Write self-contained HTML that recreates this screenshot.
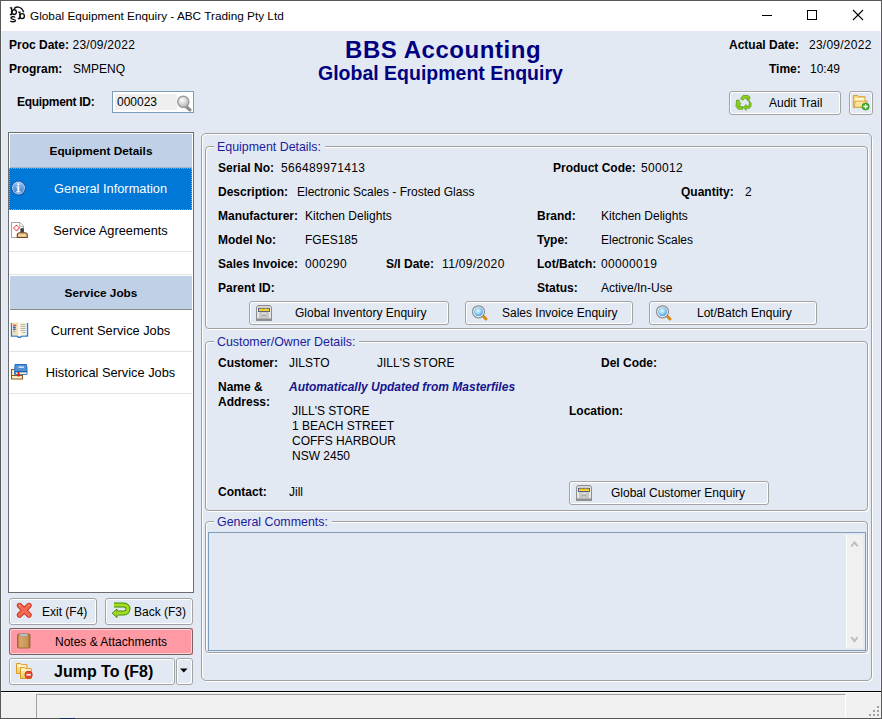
<!DOCTYPE html>
<html><head><meta charset="utf-8">
<style>
*{box-sizing:border-box;margin:0;padding:0}
html,body{width:882px;height:719px;overflow:hidden;background:#e3e9f3}
body{font-family:"Liberation Sans",sans-serif;font-size:12px;color:#000;position:relative}
.a{position:absolute;white-space:nowrap;line-height:14px}
.b{font-weight:bold}
.btn{position:absolute;border:1px solid #a3a3a3;border-radius:3px;box-shadow:inset 1px 1px 0 #fff,inset -1px -1px 0 #fff;background:#e3e9f3}
.fs{position:absolute;border:1px solid #a0a0a0;border-radius:4px;box-shadow:inset 1px 1px 0 #fff,1px 1px 0 #fff}
.lg{position:absolute;background:#e3e9f3;color:#1c1c9c;padding:0 4px 0 3px;font-size:12.4px;line-height:14px;white-space:nowrap}
.n{letter-spacing:.35px}
.pnl{position:absolute;left:8px;top:132px;width:186px;height:461px;background:#fff;border:1px solid #6d6d6d}
.hdr{position:absolute;left:1px;width:182px;height:34px;background:#bfd0e7;font-weight:bold;font-size:11.8px;text-align:center;line-height:34px;border-bottom:1px solid #8a8a8a}
.it{position:absolute;left:0px;width:183px;height:42px;font-size:12.8px;line-height:42px;padding-left:20px;text-align:center;border-bottom:1px solid #e3e3e3}
.ic{position:absolute}
</style></head>
<body>
<!-- window frame -->
<div style="position:absolute;left:0;top:0;width:882px;height:719px;border:1px solid #5a5a5a;"></div>
<div style="position:absolute;left:1px;top:31px;width:1px;height:660px;background:#eaf0fc"></div>
<div style="position:absolute;left:880px;top:31px;width:1px;height:660px;background:#eaf0fc"></div>
<div style="position:absolute;left:1px;top:1px;width:880px;height:30px;background:#fff"></div>
<div class="a" style="left:30px;top:9px;font-size:11.8px">Global Equipment Enquiry - ABC Trading Pty Ltd</div>

<!-- window controls -->
<div style="position:absolute;left:762px;top:15px;width:10px;height:1px;background:#000"></div>
<div style="position:absolute;left:807px;top:10px;width:10px;height:10px;border:1px solid #000"></div>
<svg class="ic" style="left:852px;top:9px" width="12" height="12" viewBox="0 0 12 12"><path d="M1 1L11 11M11 1L1 11" stroke="#000" stroke-width="1.1"/></svg>

<!-- status bar -->
<div style="position:absolute;left:1px;top:691px;width:880px;height:1px;background:#000"></div>
<div style="position:absolute;left:1px;top:692px;width:880px;height:26px;background:#f0f0f0;border-top:1px solid #fff"></div>
<div style="position:absolute;left:36px;top:694px;width:810px;height:24px;border-left:1px solid #a0a0a0;border-top:1px solid #a0a0a0;border-right:1px solid #fff"></div>
<div style="position:absolute;left:0;top:718px;width:882px;height:1px;background:#555"></div>
<div style="position:absolute;left:60px;top:718px;width:15px;height:1px;background:#1a2a50"></div>
<svg class="ic" style="left:868px;top:705px" width="12" height="12"><g fill="#a0a0a0"><rect x="9" y="1" width="2" height="2"/><rect x="5" y="5" width="2" height="2"/><rect x="9" y="5" width="2" height="2"/><rect x="1" y="9" width="2" height="2"/><rect x="5" y="9" width="2" height="2"/><rect x="9" y="9" width="2" height="2"/></g></svg>

<!-- header -->
<div class="a b" style="left:9px;top:38px">Proc Date:</div>
<div class="a" style="left:72.5px;top:38px;letter-spacing:.25px">23/09/2022</div>
<div class="a b" style="left:9px;top:62px">Program:</div>
<div class="a" style="left:73px;top:62px">SMPENQ</div>
<div class="a b" style="left:345px;top:37px;font-size:24px;line-height:26px;letter-spacing:0.55px;color:#000080">BBS Accounting</div>
<div class="a b" style="left:318px;top:62px;font-size:19.5px;line-height:22px;color:#000080">Global Equipment Enquiry</div>
<div class="a b" style="left:729px;top:38px">Actual Date:</div>
<div class="a" style="left:809px;top:38px;letter-spacing:.25px">23/09/2022</div>
<div class="a b" style="left:769px;top:62px">Time:</div>
<div class="a" style="left:810px;top:62px">10:49</div>
<div class="a b" style="left:17px;top:95px;letter-spacing:-.3px">Equipment ID:</div>
<!-- equipment id input -->
<div style="position:absolute;left:112px;top:91px;width:82px;height:22px;border:1px solid #7f9db9;background:#fff"></div>
<div style="position:absolute;left:115px;top:94px;width:62px;height:16px;background:#efefef"></div>
<div class="a" style="left:117px;top:95px">000023</div>

<!-- audit trail -->
<div class="btn" style="left:729px;top:91px;width:112px;height:24px"></div>
<div class="a" style="left:769px;top:96px">Audit Trail</div>

<div class="btn" style="left:849px;top:91px;width:24px;height:24px"></div>


<!-- left panel -->
<div class="pnl">
  <div class="hdr" style="top:1px;height:34px;border-bottom:1px solid #a8b4c4">Equipment Details</div>
  <div class="it" style="top:35px;height:42px;background:#0078d7;color:#fff;border:1px dotted #f48a20;line-height:40px">General Information</div>
  <div class="it" style="top:77px">Service Agreements</div>
  <div class="it" style="top:119px;height:23px"></div>
  <div class="hdr" style="top:143px;height:34px">Service Jobs</div>
  <div class="it" style="top:177px">Current Service Jobs</div>
  <div class="it" style="top:219px">Historical Service Jobs</div>
</div>

<!-- bottom left buttons -->
<div class="btn" style="left:9px;top:598px;width:88px;height:27px"></div>
<div class="a" style="left:42px;top:605px">Exit (F4)</div>
<div class="btn" style="left:105px;top:598px;width:88px;height:27px"></div>
<div class="a" style="left:134px;top:605px">Back (F3)</div>
<div style="position:absolute;left:9px;top:628px;width:184px;height:27px;background:#ff9aa4"></div><div style="position:absolute;left:9px;top:628px;width:184px;height:27px;border:1px solid #7a6262;border-radius:3px;box-shadow:inset 1px 1px 0 #ffd0d6,inset -1px -1px 0 #ffd0d6"></div>
<div class="a" style="left:55px;top:635px">Notes &amp; Attachments</div>
<div class="btn" style="left:9px;top:658px;width:166px;height:27px"></div>
<div class="a b" style="left:54px;top:663px;font-size:16px;line-height:18px">Jump To (F8)</div>
<div class="btn" style="left:176px;top:658px;width:17px;height:27px"></div>
<svg class="ic" style="left:179px;top:668px" width="10" height="6"><path d="M1 0.5h7.5L4.75 4.5z" fill="#000"/></svg>

<!-- right outer panel -->
<div class="fs" style="left:201px;top:133px;width:671px;height:548px;border-radius:5px"></div>

<!-- Equipment details fieldset -->
<div class="fs" style="left:205px;top:146px;width:663px;height:183px"></div>
<div class="lg" style="left:214px;top:140px">Equipment Details:</div>
<div class="a b" style="left:218px;top:161px">Serial No:</div>
<div class="a n" style="left:281px;top:161px">566489971413</div>
<div class="a b" style="left:553px;top:161px">Product Code:</div>
<div class="a n" style="left:641px;top:161px">500012</div>
<div class="a b" style="left:218px;top:185px">Description:</div>
<div class="a" style="left:297px;top:185px">Electronic Scales - Frosted Glass</div>
<div class="a b" style="left:681px;top:185px">Quantity:</div>
<div class="a" style="left:745px;top:185px">2</div>
<div class="a b" style="left:218px;top:209px">Manufacturer:</div>
<div class="a" style="left:305px;top:209px">Kitchen Delights</div>
<div class="a b" style="left:537px;top:209px">Brand:</div>
<div class="a" style="left:601px;top:209px">Kitchen Delights</div>
<div class="a b" style="left:218px;top:233px">Model No:</div>
<div class="a" style="left:305px;top:233px">FGES185</div>
<div class="a b" style="left:537px;top:233px">Type:</div>
<div class="a" style="left:601px;top:233px">Electronic Scales</div>
<div class="a b" style="left:218px;top:257px">Sales Invoice:</div>
<div class="a n" style="left:305px;top:257px">000290</div>
<div class="a b" style="left:386px;top:257px">S/I Date:</div>
<div class="a n" style="left:442px;top:257px">11/09/2020</div>
<div class="a b" style="left:537px;top:257px">Lot/Batch:</div>
<div class="a n" style="left:601px;top:257px">00000019</div>
<div class="a b" style="left:218px;top:281px">Parent ID:</div>
<div class="a b" style="left:537px;top:281px">Status:</div>
<div class="a" style="left:601px;top:281px">Active/In-Use</div>

<div class="btn" style="left:249px;top:301px;width:200px;height:24px"></div>
<div class="a" style="left:295px;top:306px">Global Inventory Enquiry</div>
<div class="btn" style="left:465px;top:301px;width:168px;height:24px"></div>
<div class="a" style="left:502px;top:306px">Sales Invoice Enquiry</div>
<div class="btn" style="left:649px;top:301px;width:168px;height:24px"></div>
<div class="a" style="left:697px;top:306px">Lot/Batch Enquiry</div>

<!-- Customer fieldset -->
<div class="fs" style="left:205px;top:341px;width:663px;height:170px"></div>
<div class="lg" style="left:214px;top:335px">Customer/Owner Details:</div>
<div class="a b" style="left:218px;top:356px">Customer:</div>
<div class="a" style="left:289px;top:356px">JILSTO</div>
<div class="a" style="left:377px;top:356px">JILL'S STORE</div>
<div class="a b" style="left:601px;top:356px">Del Code:</div>
<div class="a b" style="left:218px;top:380px">Name &amp;</div>
<div class="a b" style="left:218px;top:395px">Address:</div>
<div class="a b" style="left:289px;top:380px;font-style:italic;color:#16168e">Automatically Updated from Masterfiles</div>
<div class="a" style="left:292px;top:404px;line-height:15px">JILL'S STORE<br>1 BEACH STREET<br>COFFS HARBOUR<br>NSW 2450</div>
<div class="a b" style="left:569px;top:404px">Location:</div>
<div class="a b" style="left:218px;top:485px">Contact:</div>
<div class="a" style="left:289px;top:485px">Jill</div>
<div class="btn" style="left:569px;top:481px;width:200px;height:24px"></div>
<div class="a" style="left:611px;top:486px">Global Customer Enquiry</div>

<!-- General comments -->
<div class="fs" style="left:205px;top:521px;width:663px;height:132px"></div>
<div class="lg" style="left:214px;top:515px">General Comments:</div>
<div style="position:absolute;left:208px;top:532px;width:658px;height:119px;border:1px solid #7f9db9;background:#e3e9f3"></div>
<div style="position:absolute;left:846px;top:535px;width:17px;height:113px;background:#f0f0f0;border-left:1px solid #fff"></div>


<!--ICONS--><svg style="position:absolute;left:0;top:0;pointer-events:none" width="882" height="719" viewBox="0 0 882 719">
<defs>
 <linearGradient id="gBlue" x1="0" y1="0" x2="0" y2="1"><stop offset="0" stop-color="#8cc0f0"/><stop offset="1" stop-color="#3b7fd0"/></linearGradient>
 <radialGradient id="gLens" cx="45%" cy="40%" r="60%"><stop offset="0" stop-color="#e8f6ff"/><stop offset=".5" stop-color="#9fd4f7"/><stop offset="1" stop-color="#3f9ae6"/></radialGradient>
 <radialGradient id="gGrayLens" cx="40%" cy="35%" r="65%"><stop offset="0" stop-color="#ffffff"/><stop offset="1" stop-color="#b5b5b5"/></radialGradient>
 <linearGradient id="gBrown" x1="0" y1="0" x2="1" y2="0"><stop offset="0" stop-color="#a8743c"/><stop offset=".2" stop-color="#d9a868"/><stop offset=".8" stop-color="#c8945a"/><stop offset="1" stop-color="#9c6a34"/></linearGradient>
 <linearGradient id="gFold" x1="0" y1="0" x2="0" y2="1"><stop offset="0" stop-color="#fff3c0"/><stop offset="1" stop-color="#f2c65a"/></linearGradient>
 <linearGradient id="gDrawer" x1="0" y1="0" x2="0" y2="1"><stop offset="0" stop-color="#d8d8d8"/><stop offset="1" stop-color="#9a9a9a"/></linearGradient>
</defs>

<!-- title icon bsb -->
<g fill="none" stroke="#111" stroke-width="1.35">
 <path d="M9.8 7.9h1.8v6.6M9.8 14.5h2.4"/>
 <ellipse cx="14.2" cy="12.1" rx="2.2" ry="2.4"/>
 <path d="M14.1 8.9C15.5 6.2 21.6 5.7 23.7 12.3"/>
 <path d="M15.1 17.5C14.4 16.4 10.9 16.3 10.9 18.1 10.9 19.6 15.4 19 15.4 20.6 15.4 22.2 11.2 22.1 10.3 20.8"/>
 <path d="M18.1 12.1h1.8v6.5M17.8 18.5h2.4"/>
 <ellipse cx="22.1" cy="16.1" rx="2.3" ry="2.5"/>
</g>

<!-- equipment id magnifier (gray) -->
<path d="M186 106.5l4 3.5" stroke="#8d8d8d" stroke-width="3.2" stroke-linecap="round"/>
<circle cx="183.3" cy="101.8" r="5.6" fill="url(#gGrayLens)" stroke="#9b9b9b" stroke-width="1.4"/>

<!-- recycle icon -->
<g fill="#8fcf1a" stroke="#4d9a10" stroke-width=".7" stroke-linejoin="round">
 <path d="M740.5 98.5l2.5-3h5l2.2 1.8-1.6 3.6-2.2-1.4 1.4-1.2h-3.4l-1.5 2z"/>
 <path d="M736.6 100l3.3.4-0.8 1 1.7 2.2-1.9 3h4v2.6h-4.6l-2.4-2.8z"/>
 <path d="M749 100.5l2 2.3v3.5l-1.6 2h-3.3v2.2l-2.8-3.2 2.8-2.8v1.6h2.8l.4-2.5z"/>
</g>

<!-- folder + icon -->
<path d="M853.3 95.5h4.5l1 1.2h6.2v10.6h-11.7z" fill="#f5d57a" stroke="#d59a3a" stroke-width=".9"/>
<path d="M855.3 101h12l-2 6.3h-11.3z" fill="#fbe39a" stroke="#d59a3a" stroke-width=".9"/>
<path d="M854.8 98h9.5v2.5h-9.5z" fill="#fff5d0"/>
<circle cx="865.6" cy="106.5" r="3.6" fill="#3fae24" stroke="#2a8a15" stroke-width=".6"/>
<path d="M865.6 104.3v4.4M863.4 106.5h4.4" stroke="#fff" stroke-width="1.3"/>

<!-- info icon -->
<circle cx="18.5" cy="188" r="7.4" fill="#1d52a6"/>
<circle cx="18.5" cy="188" r="6.4" fill="#bcd6f4"/>
<circle cx="18.5" cy="188" r="5.6" fill="url(#gBlue)"/>
<circle cx="18.4" cy="184.4" r="1.15" fill="#fff"/>
<path d="M16.6 186.2h2.6v5.1h1.3v1.1h-4.2v-1.1h1.2v-4h-0.9z" fill="#fff"/>

<!-- service agreements icon -->
<path d="M11.5 222.5h8.5l3.5 3.5v11.5h-12z" fill="#fff" stroke="#a3a3a3" stroke-width="1"/>
<path d="M19.5 223v3.5h3.5" fill="#f0f0f0" stroke="#b0b0b0" stroke-width=".8"/>
<path d="M16.5 225.2l2.8 2.8-2.8 2.8-2.8-2.8z" fill="none" stroke="#e52a2a" stroke-width="1.1" stroke-dasharray="1.1 .5"/>
<rect x="20.3" y="228" width="3.6" height="4.8" rx="1.5" fill="#3a4250"/>
<path d="M17.3 237.5v-2.8c0-1.2 1.2-2 2.4-2h5.2c1.2 0 2.4.8 2.4 2v2.8z" fill="#e7c08a" stroke="#6e4416" stroke-width="1.1"/>
<path d="M18.8 235.2h6.8" stroke="#f7e2c0" stroke-width="1"/>

<!-- current service jobs book icon -->
<path d="M11.5 323v13h5.5l1.5 1.3h2l1.5-1.3h5.5v-13" fill="none" stroke="#2f7fd0" stroke-width="1.4"/>
<path d="M12.5 322.5h6v13h-6z" fill="#f5deb3"/>
<path d="M19.5 322.5h6.3v13h-6.3z" fill="#faf0dc"/>
<path d="M13 325.2h3.3M13 327.3h2.6M13 329.3h2.6" stroke="#e02a10" stroke-width="1.1"/>
<path d="M13 327.4h2.6M13 329.4h2.6" stroke="#1f6fd8" stroke-width="1.1"/>
<path d="M13 331.5h2.5M20.5 324.5h5M20.5 326.5h5M20.5 328.5h5M20.5 330.5h5M22.5 332.5h3" stroke="#9a9a9a" stroke-width=".7"/>
<path d="M19 322.5v13" stroke="#fff" stroke-width="1"/>

<!-- historical books icon -->
<path d="M11.5 369.5h11v9.5h-11z" fill="#fff5c8" stroke="#8a5520" stroke-width="1.1"/>
<path d="M11.5 375.5h11" stroke="#8a5520" stroke-width="1.1"/>
<path d="M15 364.5h11.5l.5 3.5v6.3h-12.5z" fill="#4e92d8" stroke="#2a6cc0" stroke-width="1"/>
<path d="M15 371.5h12" stroke="#1f5fb0" stroke-width="1"/>
<path d="M16 372.5h10.5v1.5h-10.5z" fill="#fff5c8"/>
<path d="M18.5 366.5h5.5v1.3h-5.5z" fill="#e8f2ff"/>
<path d="M17.5 372h2v4.5h-2z" fill="#f01010"/>

<!-- exit X -->
<path d="M19.5 605.5L29 615M29 605.5L19.5 615" stroke="#c8321e" stroke-width="5.4" stroke-linecap="round"/>
<path d="M19.5 605.5L29 615M29 605.5L19.5 615" stroke="#f36a52" stroke-width="3.6" stroke-linecap="round"/>
<path d="M19 605l1.5 1.5M28 604.7l1 1" stroke="#ffb0a0" stroke-width="1"/>

<!-- back arrow -->
<path d="M114 605h10a4 4 0 0 1 0 8h-7" fill="none" stroke="#3f8a0a" stroke-width="5" stroke-linejoin="round"/>
<path d="M114 605h10a4 4 0 0 1 0 8h-7" fill="none" stroke="#a6dc20" stroke-width="3"/>
<path d="M112.2 613.2l4.8-4.2v8.6z" fill="#a6dc20" stroke="#3f8a0a" stroke-width="1" stroke-linejoin="round"/>
<path d="M117.2 611.2v4" stroke="#a6dc20" stroke-width="1.5"/>

<!-- notes clipboard -->
<rect x="17.5" y="634" width="12.5" height="14" rx="1.2" fill="url(#gBrown)" stroke="#8e6230" stroke-width=".8"/>
<path d="M20 634.2h7.5v1.6h-7.5z" fill="#e8eef5" stroke="#8a96a8" stroke-width=".6"/>

<!-- jump to folders icon -->
<path d="M16.5 663.5h4l1 1.2h5.5v8.8h-10.5z" fill="url(#gFold)" stroke="#dc9a28" stroke-width="1"/>
<path d="M17.5 666h8.5" stroke="#fffbe8" stroke-width="1"/>
<path d="M20.5 667.5h4l1 1.2h5.8v9.8h-10.8z" fill="url(#gFold)" stroke="#dc9a28" stroke-width="1"/>
<path d="M21.5 670h9" stroke="#fffbe8" stroke-width="1"/>
<circle cx="28.6" cy="674.8" r="3.7" fill="#ea4a38" stroke="#b8281a" stroke-width=".7"/>
<path d="M26.4 674.8h4.4" stroke="#fff" stroke-width="1.4"/>

<!-- drawer icons -->
<g id="drw">
 <path d="M256 307l2-2h12l2 2v14h-16z" fill="#8e8e8e"/>
 <path d="M258 306h12l1 1h-14z" fill="#d4d4d4"/>
 <rect x="257" y="307" width="14" height="11" fill="#e6e6e6"/>
 <rect x="258.5" y="308.3" width="11" height="3.2" fill="#f2d52c" stroke="#4c5678" stroke-width=".9"/>
 <path d="M260 309.5l2 -1 1.5 1 2-1 2 1" stroke="#e49a20" stroke-width=".6" fill="none"/>
 <rect x="259" y="312" width="10" height="6" fill="#c9c9c9"/>
 <path d="M262 313.8h4" stroke="#f0f0f0" stroke-width="1"/>
 <path d="M261.8 316.2c.3-1 1.2-1.3 2.2-1.3s1.9.3 2.2 1.3" stroke="#9a9a9a" stroke-width="1" fill="none"/>
 <rect x="256" y="318" width="16" height="3" fill="#8e8e8e"/><rect x="257" y="318" width="14" height="1" fill="#b4b4b4"/>
</g>
<use href="#drw" x="320" y="180"/>

<!-- magnifier icons -->
<g id="mag">
 <path d="M483 316l3 3" stroke="#d88a10" stroke-width="3" stroke-linecap="round"/>
 <circle cx="478.5" cy="311.8" r="6" fill="#fff" stroke="#8e8e8e" stroke-width="1.3"/>
 <circle cx="478.5" cy="311.8" r="4.5" fill="url(#gLens)"/>
</g>
<use href="#mag" x="184" y="0"/>
<!-- scroll arrows -->
<path d="M851.3 546.3L854.5 542.3 857.7 546.3" fill="none" stroke="#bdbdbd" stroke-width="1.9"/>
<path d="M851.3 637.2L854.5 641.2 857.7 637.2" fill="none" stroke="#bdbdbd" stroke-width="1.9"/>
</svg>
<!--/ICONS-->
</body></html>
